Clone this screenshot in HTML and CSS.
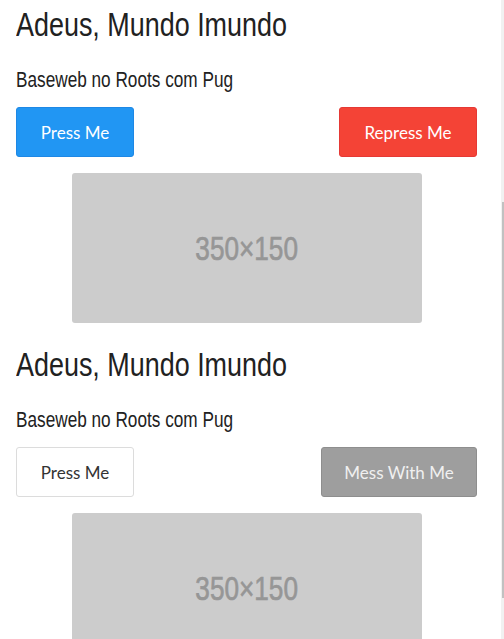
FILE: index.html
```html
<!DOCTYPE html>
<html lang="pt">
<head>
<meta charset="utf-8">
<title>Adeus, Mundo Imundo</title>
<link rel="stylesheet" href="styles.css">
</head>
<body>
<div class="page">
  <section class="block">
    <h1 class="title"><span class="narrow">Adeus, Mundo Imundo</span></h1>
    <p class="subtitle"><span class="narrow">Baseweb no Roots com Pug</span></p>
    <div class="actions">
      <button class="btn btn-primary btn-press">Press Me</button>
      <button class="btn btn-danger btn-repress">Repress Me</button>
    </div>
    <div class="placeholder"><span class="placeholder-text">350×150</span></div>
  </section>
  <section class="block">
    <h1 class="title"><span class="narrow">Adeus, Mundo Imundo</span></h1>
    <p class="subtitle"><span class="narrow">Baseweb no Roots com Pug</span></p>
    <div class="actions">
      <button class="btn btn-default btn-press">Press Me</button>
      <button class="btn btn-muted btn-mess">Mess With Me</button>
    </div>
    <div class="placeholder"><span class="placeholder-text">350×150</span></div>
  </section>
</div>
<div class="scrollbar"><div class="scrollbar-thumb"></div></div>
</body>
</html>
```
FILE: styles.css
```css
html, body {
  margin: 0;
  padding: 0;
  background: #ffffff;
  overflow: hidden;
  height: 100%;
}

.page {
  width: 461px;
  padding: 0 16px;
  font-family: "Liberation Sans", Arial, sans-serif;
  color: #212121;
}

.block {
  display: flex;
  flex-direction: column;
  padding-bottom: 17px;
}

.narrow {
  display: inline-block;
  white-space: nowrap;
  transform: scaleX(0.816);
  transform-origin: left center;
}

.title {
  margin: 5px 0 0;
  font-size: 33px;
  line-height: 40px;
  font-weight: normal;
}

.subtitle {
  margin: 21px 0 0;
  font-size: 21.5px;
  line-height: 28px;
}

.subtitle .narrow {
  transform: scaleX(0.8);
}

.actions {
  margin-top: 13px;
  display: flex;
  justify-content: space-between;
}

.btn {
  box-sizing: border-box;
  height: 50px;
  padding: 0;
  border-radius: 3px;
  border: 1px solid transparent;
  font-family: "Lato", "Open Sans", sans-serif;
  font-size: 17px;
  font-weight: 400;
  cursor: pointer;
}

.btn-press { width: 118px; }
.btn-repress { width: 138px; }
.btn-mess { width: 156px; }

.btn-primary {
  background: #2196f3;
  border-color: #1e88e5;
  color: #ffffff;
}

.btn-danger {
  background: #f44336;
  border-color: #e53935;
  color: #ffffff;
}

.btn-default {
  background: #ffffff;
  border-color: #dcdcdc;
  color: #333333;
}

.btn-muted {
  background: #9e9e9e;
  border-color: #8e8e8e;
  color: #f0f0f0;
}

.placeholder {
  align-self: center;
  margin-top: 16px;
  width: 350px;
  height: 150px;
  border-radius: 3px;
  background: #cccccc;
  color: #969696;
  display: flex;
  align-items: center;
  justify-content: center;
  font-family: "Liberation Sans", Arial, sans-serif;
  font-size: 34px;
  font-weight: normal;
}

.placeholder-text {
  display: inline-block;
  transform: scaleX(0.77);
  transform-origin: center;
  -webkit-text-stroke: 0.7px #969696;
}

.scrollbar {
  position: fixed;
  top: 0;
  right: 0;
  width: 3px;
  height: 100%;
  background: #f1f1f1;
}

.scrollbar-thumb {
  position: absolute;
  top: 202px;
  left: 1px;
  width: 2px;
  height: 396px;
  background: #c1c1c1;
}
```
